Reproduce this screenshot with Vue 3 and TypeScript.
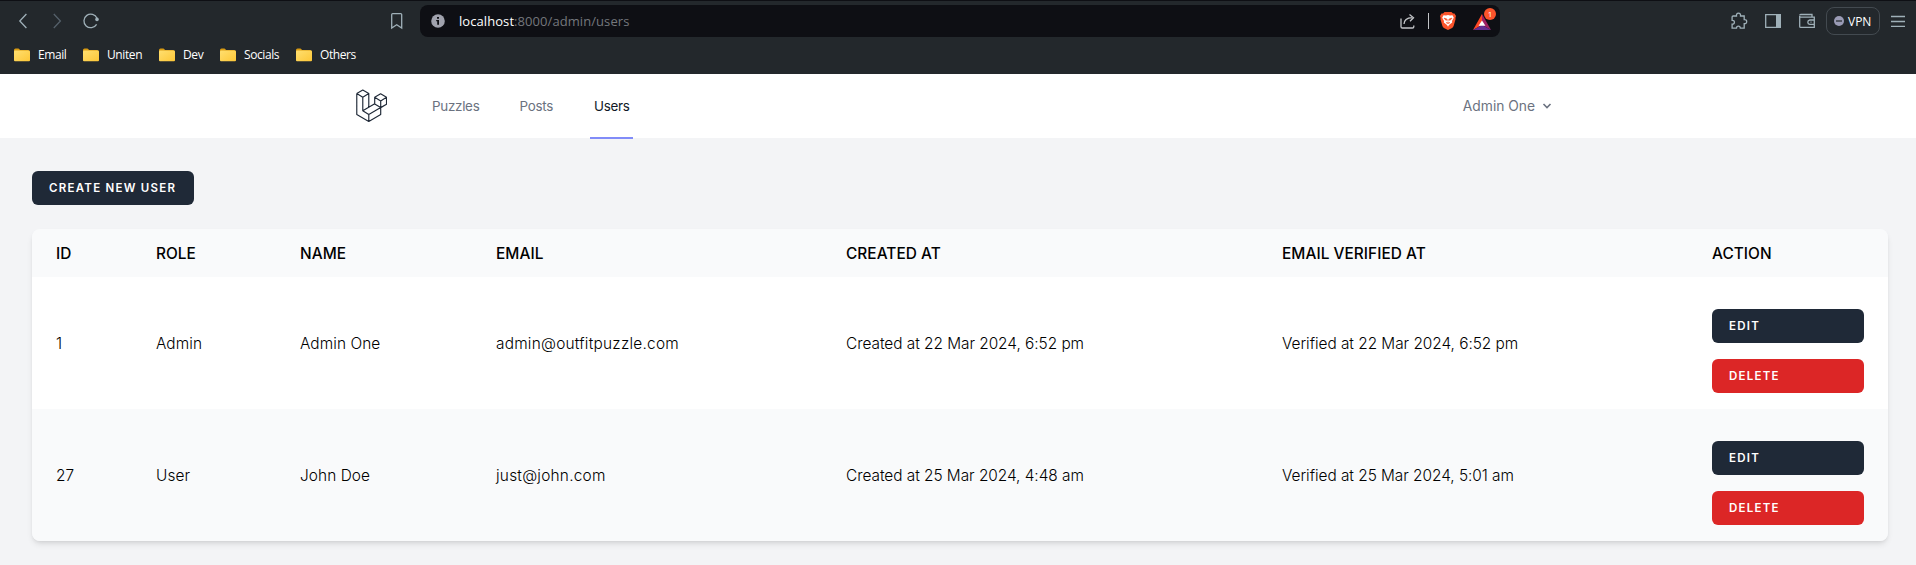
<script setup lang="ts">
interface User {
  id: number
  role: string
  name: string
  email: string
  created: string
  verified: string
}

const bookmarks: string[] = ['Email', 'Uniten', 'Dev', 'Socials', 'Others']
const links: string[] = ['Puzzles', 'Posts', 'Users']
const activeLink = 'Users'
const columns: string[] = ['ID', 'Role', 'Name', 'Email', 'Created at', 'Email verified at', 'Action']
const users: User[] = [
  { id: 1, role: 'Admin', name: 'Admin One', email: 'admin@outfitpuzzle.com', created: '22 Mar 2024, 6:52 pm', verified: '22 Mar 2024, 6:52 pm' },
  { id: 27, role: 'User', name: 'John Doe', email: 'just@john.com', created: '25 Mar 2024, 4:48 am', verified: '25 Mar 2024, 5:01 am' },
]
</script>

<template>
  <div class="window">
    <header class="chrome">
      <div class="toolbar">
        <div class="history">
          <svg class="ic" width="20" height="20" viewBox="0 0 20 20"><path d="M13.400 3 6.800 10l6.600 7" /></svg>
          <svg class="ic dim" width="20" height="20" viewBox="0 0 20 20"><path d="m6.800 3 6.600 7-6.600 7" /></svg>
          <svg class="ic" width="20" height="20" viewBox="0 0 20 20"><path d="M15.600 13.400A6.800 6.800 0 1 1 16 7.200" /><circle class="dot" cx="16" cy="8.400" r="1.800" /></svg>
        </div>
        <svg class="ic bookmark" width="16" height="20" viewBox="0 0 16 20"><path d="M2.700 3.600q0-1 1-1h8q1 0 1 1V17l-5-3.200-5 3.200z" /></svg>
        <div class="address">
          <svg class="info" width="14" height="14" viewBox="0 0 14 14"><circle cx="7" cy="7" r="6.800" fill="#a0a2ad" /><path d="M6 3.100h2v1.700H6zM5.200 6H8v4.800H6.200V7.300h-1z" fill="#0e0f14" /></svg>
          <span class="url"><b>localhost</b>:8000/admin/users</span>
          <svg class="ic share" width="18" height="18" viewBox="0 0 18 18"><path d="M2 6.500v8.200q0 1.300 1.300 1.300h10.200q1.300 0 1.300-1.300v-1.200M5 12q.2-6 8-6.400M10.500 2.500l4 3.200-3.500 3.500" /></svg>
          <i class="rule"></i>
          <svg class="brave" width="16" height="18" viewBox="0 0 16 18">
            <path d="M4.500 0h7L13 1.500h1.500L16 4l-.6 2 .2 1-2 7q-.4 1.200-1.500 2L8 18l-4.100-2q-1.100-.8-1.500-2l-2-7 .2-1L0 4l1.500-2.500H3z" fill="#fb542b" />
            <path d="m3.500 3.200 2.500.3 2-.5 2 .5 2.500-.3 1.300 2.600-1.800 3.100.2 1.700-3.200 2.500L8 14.700l-1-1.600-3.200-2.500.2-1.700-1.800-3.100z" fill="#fff" />
            <path d="M4 6.200 6.800 7l-.6 1.400zM12 6.200 9.200 7l.6 1.400zM8 7v2.500M6 10.500l2 1 2-1" fill="#fb542b" stroke="#fb542b" stroke-width=".8" />
          </svg>
          <div class="rewards">
            <svg width="18" height="16" viewBox="0 0 18 16"><path d="M9 0 0 16l9-5z" fill="#ff4724" /><path d="M9 0l9 16-9-5z" fill="#9e1f63" /><path d="m0 16 9-5 9 5z" fill="#662d91" /><path d="m9 6.400 3.400 5.400H5.600z" fill="#fff" /></svg>
            <span class="badge">1</span>
          </div>
        </div>
        <div class="tools">
          <svg class="ic" width="18" height="18" viewBox="0 0 18 18"><path d="M3.200 4h3.300q-.3-2.800 2-2.800t2 2.800h3.700v3.600q2.500-.1 2.500 2t-2.500 2v4.600h-3.900q0-2-1.900-2t-1.900 2H2.100v-4q2.300.1 2.300-1.900T2.100 8.400V5q0-1 1.100-1z" /></svg>
          <svg class="ic" width="18" height="18" viewBox="0 0 18 18"><path d="M1.700 2.600h14.600v12.800H1.700z" /><path class="solid" d="M12 2h5v14h-5z" /></svg>
          <svg class="ic" width="18" height="18" viewBox="0 0 18 18"><path d="M1.700 3.500q0-1 1-1H14v2.200M1.700 4q0 1.200 1.300 1.200h13.300v10.200H2.700q-1 0-1-1zM16.300 8h-4.500q-2 .4-2 2.200t2 2.200h4.500M12.500 10.200h1" /></svg>
          <div class="vpn">
            <svg width="10" height="10" viewBox="0 0 10 10"><circle cx="5" cy="5" r="5" fill="#9a9bb5" /><path d="M2 5h6" stroke="#23282c" stroke-width="1.200" /></svg>
            <span>VPN</span>
          </div>
          <svg class="ic menu" width="14" height="12" viewBox="0 0 14 12"><path d="M0 1.500h14M0 6.500h14M0 11.500h14" /></svg>
        </div>
      </div>
      <div class="bookmarks">
        <div v-for="b in bookmarks" :key="b" class="mark">
          <svg width="16" height="14" viewBox="0 0 16 14">
            <defs><linearGradient id="folder" x1="0" y1="0" x2="1" y2="1"><stop offset="0" stop-color="#ffdf70" /><stop offset="1" stop-color="#fdc737" /></linearGradient></defs>
            <path d="M0 2q0-1.500 1.500-1.500h3L6.200 2H14q1.500 0 1.500 1.500V12H0z" fill="#d99b12" /><rect y="2.500" width="16" height="10.800" rx="1" fill="url(#folder)" />
          </svg>
          <span>{{ b }}</span>
        </div>
      </div>
    </header>

    <nav class="nav">
      <svg class="logo" width="31" height="34" viewBox="0 0 32 34" preserveAspectRatio="none">
        <path d="M.8 4.500 7 1l6.200 3.500V18M.8 4.500 7 8.300l6.200-3.800M.8 4.500v21l12.400 7 12.300-7v-7M7 8.300v13.400l6.200 3.700v7M7 21.700l12.300-7M13.200 25.400l12.300-6.900M19.300 8.300l6.100-3.500 6.100 3.500v7l-6 3.300-6.200-3.700zM19.300 8.300l6.200 3.600 6-3.600M25.500 11.900v6.700" />
      </svg>
      <div class="links">
        <a v-for="l in links" :key="l" :class="{ active: l === activeLink }">{{ l }}</a>
      </div>
      <div class="account">
        <span>Admin One</span>
        <svg width="10" height="6" viewBox="0 0 10 6"><path d="m1.500 1 3.500 3.500L8.500 1" /></svg>
      </div>
    </nav>

    <main class="content">
      <button class="btn create">Create new user</button>
      <section class="table">
        <div class="row head">
          <div v-for="c in columns" :key="c">{{ c }}</div>
        </div>
        <div v-for="u in users" :key="u.id" class="row">
          <div>{{ u.id }}</div>
          <div>{{ u.role }}</div>
          <div>{{ u.name }}</div>
          <div class="email">{{ u.email }}</div>
          <div class="date">Created at {{ u.created }}</div>
          <div class="date">Verified at {{ u.verified }}</div>
          <div class="actions">
            <button class="btn">Edit</button>
            <button class="btn danger">Delete</button>
          </div>
        </div>
      </section>
    </main>
  </div>
</template>

<style>
body {
  background: #f3f4f6;
}
</style>

<style scoped>
.window {
  height: 565px;
  overflow: hidden;
  background: #f3f4f6;
  font-family: Inter, 'Liberation Sans', sans-serif;
}
svg {
  display: block;
  flex: none;
}
.chrome {
  box-sizing: border-box;
  height: 74px;
  border-top: 1px solid #0e0f14;
  background: #23282c;
  font-family: 'Open Sans', sans-serif;
  color: #fff;
}
.toolbar {
  display: flex;
  align-items: center;
  height: 40px;
}
.ic {
  fill: none;
  stroke: #9fb0b8;
  stroke-width: 1.3;
}
.ic.dim {
  stroke: #55606a;
}
.ic .dot,
.ic .solid {
  fill: #9fb0b8;
  stroke: none;
}
.history {
  display: flex;
  gap: 14px;
  padding-left: 13px;
}
.bookmark {
  margin-left: 288px;
}
.address {
  display: flex;
  align-items: center;
  box-sizing: border-box;
  width: 1080px;
  height: 32px;
  margin-left: 15px;
  padding-left: 11px;
  border-radius: 8px;
  background: #0e0f14;
}
.url {
  flex: 1;
  margin-left: 14px;
  font-size: 13px;
  letter-spacing: 0.07px;
  color: #74777c;
}
.url b {
  font-weight: 400;
  color: #fff;
}
.share {
  stroke: #c3c5c8;
}
.rule {
  width: 1px;
  height: 16px;
  margin: 0 11px;
  background: #c3c5c8;
}
.rewards {
  position: relative;
  margin: 2px 9px 0 17px;
}
.badge {
  position: absolute;
  top: -6px;
  left: 11px;
  width: 12px;
  height: 12px;
  border-radius: 50%;
  background: #fb542b;
  font-size: 8px;
  line-height: 12px;
  text-align: center;
}
.tools {
  display: flex;
  align-items: center;
  gap: 16px;
  margin-left: 230px;
}
.vpn {
  display: flex;
  align-items: center;
  box-sizing: border-box;
  width: 54px;
  height: 28px;
  margin: 0 -5px 0 -6px;
  padding-left: 7px;
  gap: 4px;
  border: 1px solid #434a50;
  border-radius: 8px;
  font-size: 12px;
}
.bookmarks {
  display: grid;
  grid-template-columns: 69px 76px 61px 76px auto;
  align-items: center;
  height: 27px;
  padding-left: 14px;
}
.mark {
  display: flex;
  align-items: center;
  gap: 8px;
  font-size: 12px;
  letter-spacing: -0.4px;
}

.nav {
  display: flex;
  box-sizing: border-box;
  height: 65px;
  padding: 0 364px 0 356px;
  border-bottom: 1px solid #f3f4f6;
  background: #fff;
  font-size: 13.4px;
  font-weight: 400;
  color: #6b7280;
}
.logo {
  margin-top: 15px;
  fill: none;
  stroke: #1f2937;
  stroke-width: 1.2;
  stroke-linejoin: round;
}
.links {
  display: grid;
  grid-template-columns: 87.5px 74.5px 43px;
  margin-left: 41px;
  letter-spacing: -0.28px;
}
.links a {
  height: 63px;
  padding: 0 4px;
  border-bottom: 2px solid transparent;
  line-height: 64px;
}
.links a.active {
  border-color: #818cf8;
  color: #111827;
}
.account {
  display: flex;
  align-items: center;
  height: 63px;
  margin-left: auto;
  gap: 7px;
  font-size: 13.8px;
}
.account path {
  fill: none;
  stroke: #6b7280;
  stroke-width: 1.6;
}

.content {
  padding: 32px 28px 0 32px;
}
.btn {
  display: block;
  height: 34px;
  padding: 0 16px 0 17px;
  border: 0;
  border-radius: 6px;
  background: #1f2937;
  font: 600 11.5px/34px Inter, sans-serif;
  letter-spacing: 1.25px;
  text-align: left;
  text-transform: uppercase;
  color: #fff;
}
.btn.create {
  width: 162px;
  white-space: nowrap;
}
.btn.danger {
  background: #dc2626;
}
.table {
  margin-top: 24px;
  overflow: hidden;
  border-radius: 8px;
  width: 1856px;
  box-shadow: 0 4px 6px -1px rgb(0 0 0 / 0.1), 0 2px 4px -2px rgb(0 0 0 / 0.1);
}
.row {
  display: grid;
  grid-template-columns: 100px 144px 196px 350px 436px 430px 200px;
  align-items: center;
  height: 132px;
  background: #fff;
  font-size: 15.4px;
  font-weight: 300;
  letter-spacing: 0.08px;
  color: #000;
}
.row > div {
  padding: 0 24px;
}
.row:nth-child(odd) {
  background: #f9fafb;
}
.row.head {
  height: 48px;
  font-weight: 500;
  letter-spacing: 0.05px;
  text-transform: uppercase;
}
.row .email {
  letter-spacing: 0.24px;
}
.row .date {
  letter-spacing: -0.03px;
}
.actions {
  display: grid;
  gap: 16px;
  margin-top: 16px;
}
</style>
